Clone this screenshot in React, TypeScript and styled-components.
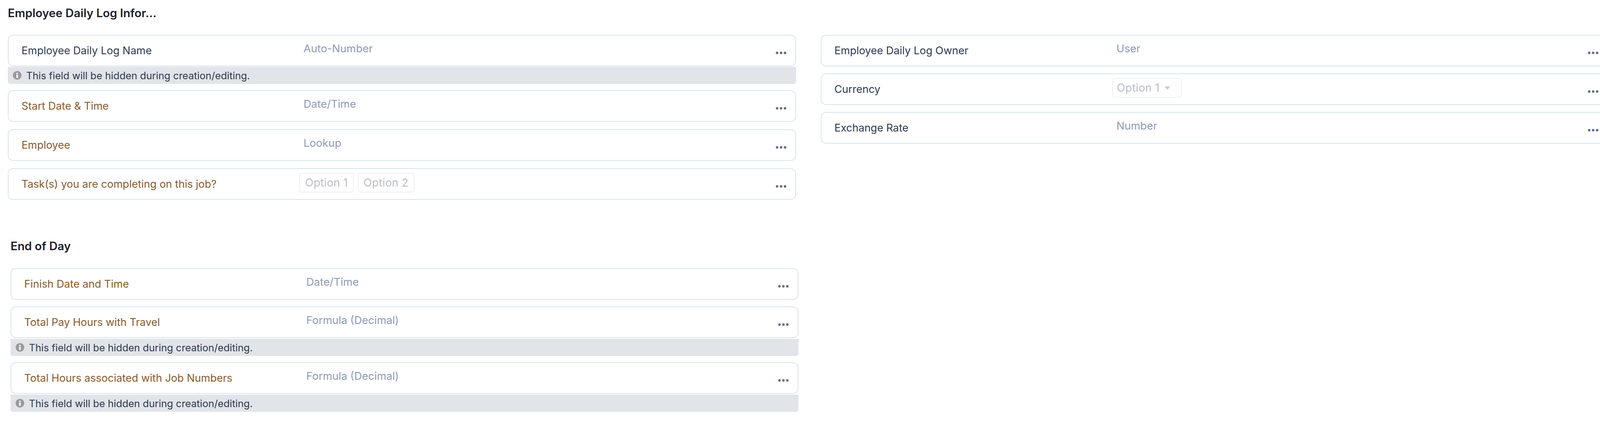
import React from 'react'
import styled, { createGlobalStyle } from 'styled-components'

const GlobalStyle = createGlobalStyle`
  html, body {
    margin: 0;
    padding: 0;
    background: #fff;
    font-family: Inter, "Noto Sans", sans-serif;
  }
  * { box-sizing: border-box; }
`

const Page = styled.div`
  width: 4156px;
  height: 1117px;
  overflow: hidden;
`

const TopSection = styled.section`
  display: flex;
  align-items: flex-start;
  padding-left: 20px;
  height: 575px;
`

const LeftColumn = styled.div`
  width: 2018px;
`

const RightColumn = styled.div`
  width: 2016px;
  margin-left: 63px;
  padding-top: 89px;
`

const BottomSection = styled.section`
  width: 2017px;
  margin-left: 27px;
`

const SectionTitle = styled.h2`
  margin: 0;
  font-size: 29.6px;
  line-height: 40px;
  font-weight: 600;
  color: #1d2129;
`

const TopTitle = styled(SectionTitle)`
  padding-top: 13px;
  height: 89px;
`

const BottomTitle = styled(SectionTitle)`
  padding-top: 35px;
  height: 112px;
`

const Field = styled.div<{ $after: number }>`
  margin-bottom: ${p => p.$after}px;
`

const Card = styled.div`
  display: grid;
  grid-template-columns: 722px 1fr auto;
  align-items: center;
  height: 81px;
  padding: 0 23px 0 33px;
  background: #fff;
  border: 2.5px solid #d9e3ef;
  border-radius: 14px;
`

const Label = styled.div<{ $required?: boolean }>`
  font-size: 27px;
  color: ${p => (p.$required ? '#8a5a2b' : '#2f3a4e')};
`

const TypeText = styled.div`
  font-size: 27.5px;
  color: #8d9ab9;
  padding-bottom: 11px;
`

const Options = styled.div`
  display: flex;
  gap: 10px;
  margin-left: -11px;
  padding-bottom: 8px;
`

const OptionChip = styled.div<{ $select?: boolean }>`
  display: flex;
  align-items: center;
  height: 50px;
  padding: 0 ${p => (p.$select ? '0 0 10px' : '13px')};
  border: 2.5px solid #eef0f3;
  border-radius: 6px;
  font-size: 28px;
  letter-spacing: 0.3px;
  color: #bcbec3;
`

const Caret = styled.svg`
  width: 15px;
  height: 9px;
  margin: 2px 27px 0 12px;
`

const MoreButton = styled.svg`
  width: 27px;
  height: 7px;
  margin-top: 12px;
`

const HiddenNote = styled.div<{ $top: number }>`
  display: flex;
  align-items: center;
  gap: 12px;
  height: 44px;
  margin-top: ${p => p.$top}px;
  padding-left: 13px;
  background: #e1e4e9;
  border-radius: 0 0 6px 6px;
  font-size: 25.5px;
  color: #2f3a4e;
`

const InfoIcon = styled.svg`
  width: 22px;
  height: 22px;
  flex: none;
`

const Dots = () => (
  <MoreButton viewBox="0 0 27 7">
    <circle cx="3.4" cy="3.5" r="3.2" fill="#636c85" />
    <circle cx="13.5" cy="3.5" r="3.2" fill="#636c85" />
    <circle cx="23.6" cy="3.5" r="3.2" fill="#636c85" />
  </MoreButton>
)

const Info = () => (
  <InfoIcon viewBox="0 0 22 22">
    <circle cx="11" cy="11" r="11" fill="#9a9a9a" />
    <rect x="9" y="9.5" width="4" height="8" rx="0.8" fill="#fff" />
    <circle cx="11" cy="6.3" r="2.1" fill="#fff" />
  </InfoIcon>
)

type FieldRowProps = {
  label: string
  type?: string
  required?: boolean
  hidden?: boolean
  noteTop?: number
  after?: number
  children?: React.ReactNode
}

const FieldRow = ({ label, type, required, hidden, noteTop = 1, after = 19, children }: FieldRowProps) => (
  <Field $after={after}>
    <Card>
      <Label $required={required}>{label}</Label>
      {children || <TypeText>{type}</TypeText>}
      <Dots />
    </Card>
    {hidden && (
      <HiddenNote $top={noteTop}>
        <Info />
        This field will be hidden during creation/editing.
      </HiddenNote>
    )}
  </Field>
)

const App = () => (
  <Page>
    <GlobalStyle />
    <TopSection>
      <LeftColumn>
        <TopTitle>Employee Daily Log Infor...</TopTitle>
        <FieldRow label="Employee Daily Log Name" type="Auto-Number" hidden after={16} />
        <FieldRow label="Start Date &amp; Time" type="Date/Time" required />
        <FieldRow label="Employee" type="Lookup" required />
        <FieldRow label="Task(s) you are completing on this job?" required>
          <Options>
            <OptionChip>Option 1</OptionChip>
            <OptionChip>Option 2</OptionChip>
          </Options>
        </FieldRow>
      </LeftColumn>
      <RightColumn>
        <FieldRow label="Employee Daily Log Owner" type="User" after={18} />
        <FieldRow label="Currency" after={18}>
          <Options>
            <OptionChip $select>
              Option 1
              <Caret viewBox="0 0 15 9">
                <path d="M0.5 0.5H14.5L8.5 8a1.3 1.3 0 0 1-2 0Z" fill="#c3cbd6" />
              </Caret>
            </OptionChip>
          </Options>
        </FieldRow>
        <FieldRow label="Exchange Rate" type="Number" />
      </RightColumn>
    </TopSection>
    <BottomSection>
      <BottomTitle>End of Day</BottomTitle>
      <FieldRow label="Finish Date and Time" type="Date/Time" required after={17} />
      <FieldRow label="Total Pay Hours with Travel" type="Formula (Decimal)" required hidden noteTop={2} after={16} />
      <FieldRow label="Total Hours associated with Job Numbers" type="Formula (Decimal)" required hidden noteTop={2} />
    </BottomSection>
  </Page>
)

export default App
